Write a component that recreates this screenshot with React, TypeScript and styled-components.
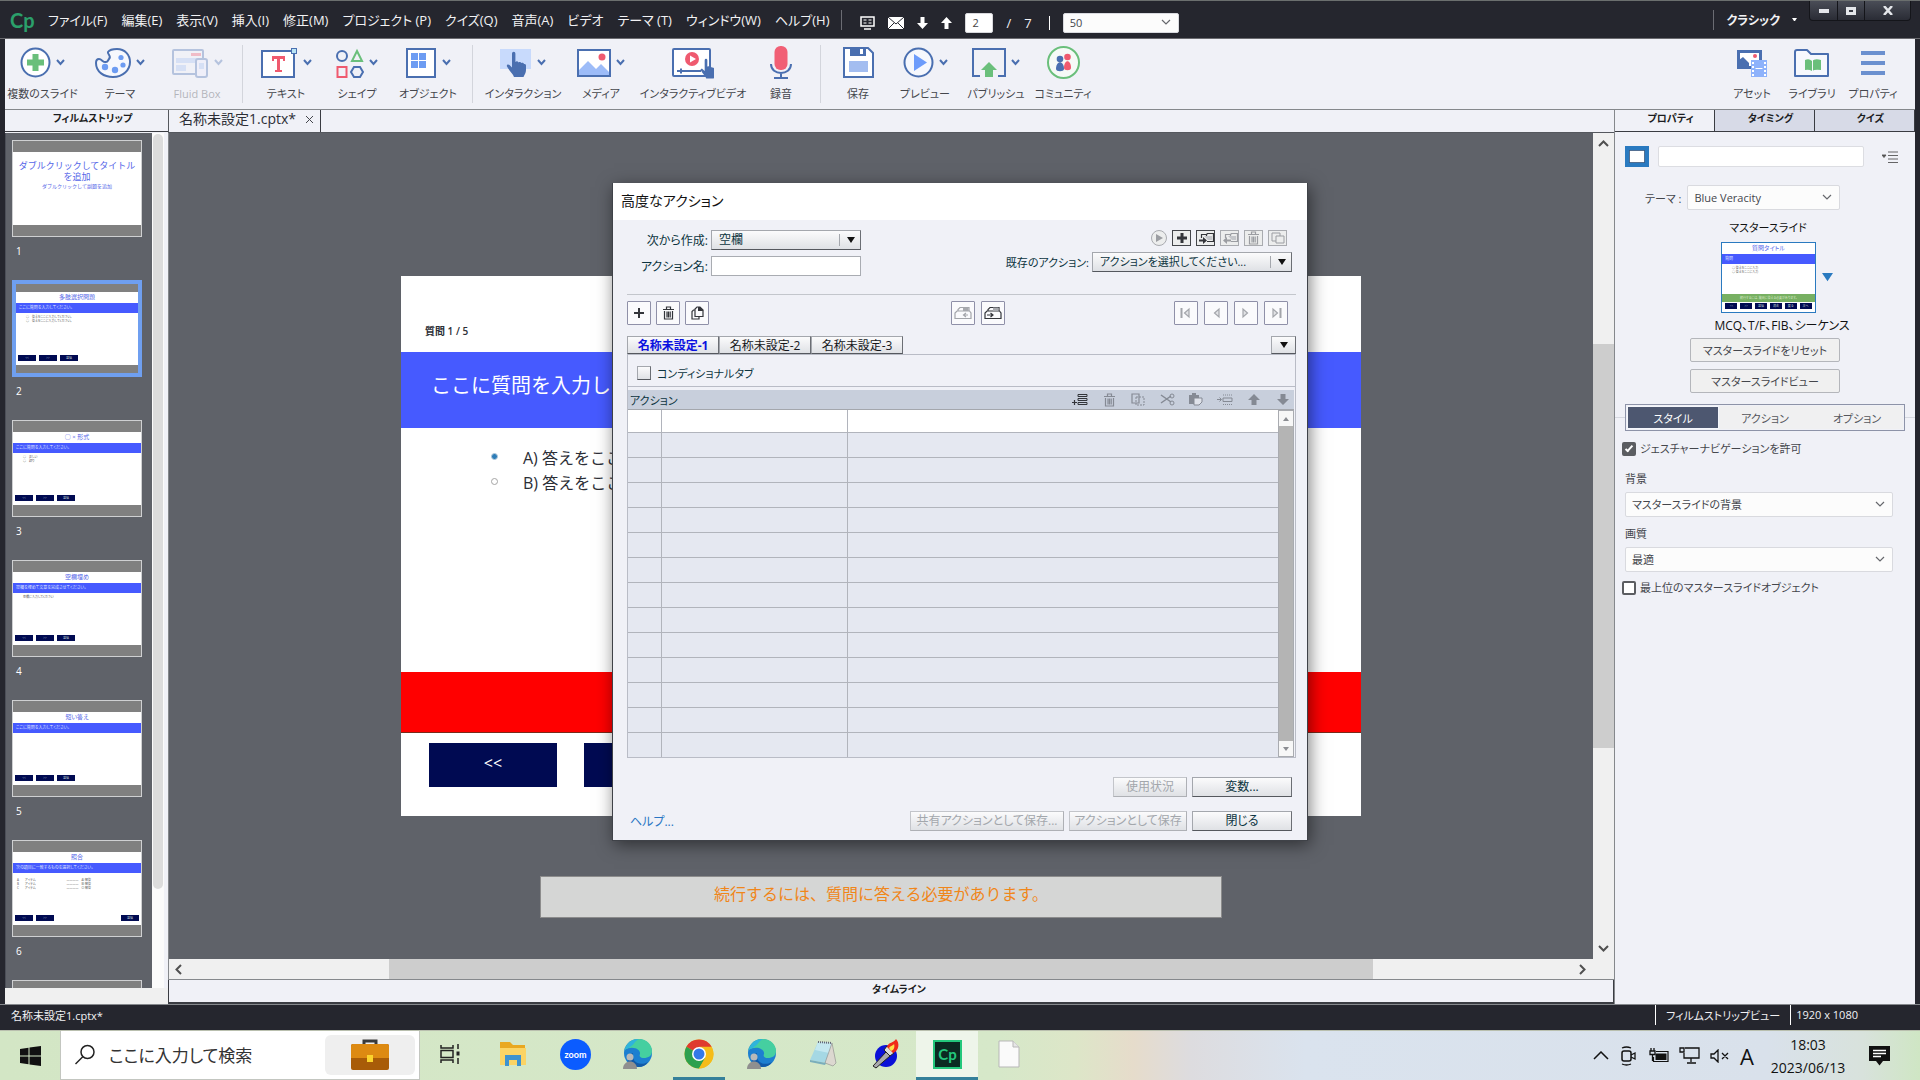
import React from "react";
import styled, { createGlobalStyle, css } from "styled-components";

const ink = "#2c2e36";
const panel = "#f0f1f7";
const dark = "#25262e";
const stage = "#5f6269";
const blue = "#4a6fb0";
const teal = "#0c3440";

const GlobalStyle = createGlobalStyle`
  *, *::before, *::after { box-sizing: border-box; }
  body { margin: 0; }
  body, button, input, select {
    font-family: "Open Sans", "Noto Sans CJK JP", sans-serif;
    font-feature-settings: "palt";
  }
  button { padding: 0; border: 0; background: none; color: inherit; font-size: inherit; }
  svg { display: block; flex: none; }
`;

/* ---------- window frame ---------- */

const Screen = styled.div`
  position: relative;
  display: flex;
  flex-direction: column;
  height: 100vh;
  overflow: hidden;
  font-size: 12px;
  color: ${ink};
  background: ${dark};
`;

const MenuBar = styled.header`
  display: flex;
  align-items: center;
  height: 39px;
  flex: none;
  padding-left: 10px;
  border-top: 1px solid #6b6f6e;
  border-bottom: 1px solid #6b6b70;
  color: #f2f2f4;
  font-size: 13px;
  white-space: nowrap;
`;

const Logo = styled.span`
  width: 38px;
  color: #2ba06b;
  font: bold 20px/24px Lato, sans-serif;
`;

const Menus = styled.nav`
  display: flex;
  gap: 14px;
  line-height: 20px;
`;

const VLine = styled.i<{ $h: number; $c?: string; $m?: string }>`
  width: 1px;
  height: ${(p) => p.$h}px;
  margin: ${(p) => p.$m || "0"};
  background: ${(p) => p.$c || "#6b6c73"};
  flex: none;
`;

const QuickTools = styled.div`
  display: flex;
  align-items: center;
  gap: 13px;
  margin-left: 18px;
  padding-top: 6px;
`;

const PageBox = styled.input`
  width: 28px;
  height: 20px;
  padding: 0 6px;
  border: 1px solid #d8d8dc;
  border-radius: 2px;
  font-size: 11px;
  color: #444;
`;

const SelectWrap = styled.span<{ $w?: string; $h?: number }>`
  display: inline-grid;
  grid-template-columns: 1fr 18px;
  align-items: center;
  width: ${(p) => p.$w || "100%"};
  height: ${(p) => p.$h || 25}px;
  & > select {
    grid-area: 1 / 1 / 2 / 3;
    width: 100%;
    height: 100%;
    appearance: none;
    padding: 0 6px;
    border: 1px solid #d9dadf;
    border-radius: 2px;
    background: #fcfcfc;
    color: #44464c;
    font-size: 11px;
  }
  & > svg { grid-area: 1 / 2; pointer-events: none; }
`;

const Workspace = styled.div`
  display: flex;
  align-items: center;
  gap: 12px;
  margin-left: auto;
  font-size: 12px;
  font-weight: 600;
`;

const WindowButtons = styled.div`
  display: flex;
  align-self: flex-start;
  margin: 0 9px 0 12px;
  border: 1px solid #14151a;
  border-top: 0;
  border-radius: 0 0 4px 4px;
  background: linear-gradient(#4a4d57, #2a2c35);
`;

const WinBtn = styled.button<{ $w: number }>`
  display: grid;
  place-items: center;
  width: ${(p) => p.$w}px;
  height: 19px;
  & + & { border-left: 1px solid #14151a; }
`;

/* ---------- main toolbar ---------- */

const Frame = styled.div`
  display: flex;
  flex-direction: column;
  flex: 1;
  min-height: 0;
  margin: 0 5px;
  background: ${panel};
`;

const ToolBar = styled.div`
  display: flex;
  align-items: center;
  height: 71px;
  flex: none;
  padding-right: 11px;
  border-bottom: 1px solid #85888c;
`;

const Tool = styled.button<{ $w: number; $off?: boolean }>`
  display: flex;
  flex-direction: column;
  align-items: center;
  gap: 7px;
  width: ${(p) => p.$w}px;
  font-size: 11px;
  line-height: 16px;
  color: #44464c;
  white-space: nowrap;
  opacity: ${(p) => (p.$off ? 0.35 : 1)};
`;

const ToolIcon = styled.span`
  display: flex;
  align-items: center;
  gap: 5px;
  height: 32px;
`;

const Spring = styled.span` flex: 1; `;

/* ---------- body ---------- */

const Body = styled.div`
  display: grid;
  grid-template-columns: 163px 1fr 301px;
  flex: 1;
  min-height: 0;
`;

const Column = styled.section`
  display: flex;
  flex-direction: column;
  min-height: 0;
  min-width: 0;
`;

const PanelTitle = styled.h2`
  margin: 0;
  height: 22px;
  flex: none;
  padding-left: 12px;
  border-bottom: 1px solid #3a3c42;
  font-size: 10px;
  line-height: 16px;
  text-align: center;
  color: #1c1d22;
`;

const Film = styled.div`
  display: grid;
  grid-template-columns: 147px 12px;
  flex: 1;
  min-height: 0;
  padding-top: 1px;
`;

const FilmList = styled.ol`
  margin: 0;
  padding: 7px 6px 0;
  list-style: none;
  overflow: hidden;
  background: ${stage};
  border-left: 1px solid #4b4e57;
`;

const FilmItem = styled.li`
  height: 140px;
  color: #fff;
  font-size: 10px;
  line-height: 14px;
`;

const FilmNumber = styled.div` padding: 7px 4px; `;

const FilmTrack = styled.div`
  padding: 1px 1px 0;
  background: #fbfbfb;
  &::before {
    content: "";
    display: block;
    height: 755px;
    border-radius: 5px;
    background: #dcdcdc;
  }
`;

const FilmFoot = styled.div`
  height: 16px;
  flex: none;
  background: #f0f0f0;
`;

const Thumb = styled.div<{ $on?: boolean }>`
  display: flex;
  flex-direction: column;
  height: 97px;
  width: 130px;
  border: 1px solid #cfd0d2;
  border-color: ${(p) => (p.$on ? "#6f9ff0" : "#cfd0d2")};
  border-width: ${(p) => (p.$on ? 4 : 1)}px;
  background: #fff;
  color: #5566e8;
  line-height: 10px;
  text-align: center;
  white-space: nowrap;
  overflow: hidden;
`;

const Band = styled.div<{ $h?: number }>`
  height: ${(p) => p.$h || 11}px;
  flex: none;
  background: #808080;
`;

const ThumbTitle = styled.div`
  height: 11px;
  flex: none;
  font-size: 6px;
`;

const ThumbBar = styled.div`
  height: 10px;
  flex: none;
  padding-left: 3px;
  background: #465aff;
  color: #dfe3ff;
  font-size: 4px;
  text-align: left;
`;

const ThumbBody = styled.div<{ $wide?: boolean }>`
  display: flex;
  flex-direction: column;
  flex: 1;
  min-height: 0;
  padding: ${(p) => (p.$wide ? "5px 50px 0 4px" : "2px 10px 0")};
  color: #555;
  font-size: 3px;
  line-height: 4px;
  text-align: left;
`;

const ThumbLine = styled.span`
  display: flex;
  justify-content: space-between;
`;

const ThumbButtons = styled.div<{ $spread?: boolean }>`
  display: flex;
  gap: 3px;
  flex: none;
  padding: 0 2px 4px;
  ${(p) => p.$spread && css` & > :last-child { margin-left: auto; } `}
`;

const ThumbKey = styled.span`
  width: 18px;
  height: 6px;
  background: #000a52;
  color: #cdd;
  font-size: 3px;
  line-height: 6px;
  text-align: center;
`;

const Cover = styled.div`
  flex: 1;
  padding-top: 8px;
  font-feature-settings: normal;
`;

const CoverText = styled.div<{ $small?: boolean }>`
  font-size: ${(p) => (p.$small ? 5 : 9)}px;
  line-height: ${(p) => (p.$small ? 9 : 11)}px;
  white-space: pre-line;
`;

const DocTabs = styled.div`
  display: flex;
  height: 23px;
  flex: none;
  border-bottom: 1px solid #55585e;
`;

const DocTab = styled.button`
  display: flex;
  align-items: center;
  gap: 10px;
  width: 153px;
  padding: 0 0 4px 10px;
  border-left: 1px solid #55585e;
  border-right: 1px solid #3a3c42;
  font-size: 14px;
  line-height: 18px;
  white-space: nowrap;
`;

const StageGrid = styled.div`
  display: grid;
  grid-template-columns: 1fr 21px;
  grid-template-rows: 1fr 21px;
  flex: 1;
  min-height: 0;
  border-left: 1px solid #85888c;
`;

const Canvas = styled.div`
  display: flex;
  flex-direction: column;
  align-items: center;
  gap: 60px;
  padding-top: 143px;
  overflow: hidden;
  background: ${stage};
`;

const VTrack = styled.div`
  display: flex;
  flex-direction: column;
  align-items: center;
  justify-content: space-between;
  padding: 6px 0;
  background: linear-gradient(#cdcdcd, #cdcdcd) 0 211px / 100% 404px no-repeat, #f0f0f0;
`;

const HTrack = styled.div`
  grid-column: 1 / -1;
  display: flex;
  align-items: center;
  justify-content: space-between;
  padding: 0 27px 0 5px;
  border-bottom: 1px solid #85888c;
  background: linear-gradient(#cdcdcd, #cdcdcd) 220px 0 / 984px 100% no-repeat, #f0f0f0;
`;

const Timeline = styled.h2`
  margin: 0;
  height: 24px;
  flex: none;
  border: solid #3a3c42;
  border-width: 0 1px 2px;
  font-size: 10px;
  line-height: 18px;
  text-align: center;
  padding-left: 16px;
  color: #1c1d22;
`;

const Slide = styled.article`
  display: flex;
  flex-direction: column;
  width: 960px;
  height: 540px;
  flex: none;
  background: #fff;
  font-feature-settings: normal;
`;

const SlideCount = styled.p`
  margin: 0;
  height: 76px;
  padding: 46px 24px 0;
  font-size: 10px;
  line-height: 18px;
  font-weight: 600;
`;

const SlideTitle = styled.h1`
  margin: 0;
  height: 76px;
  padding: 0 30px;
  background: #465aff;
  color: #fff;
  font-size: 20px;
  line-height: 68px;
  font-weight: 400;
`;

const Answers = styled.div`
  flex: 1;
  padding: 18px 90px;
  font-size: 16px;
  line-height: 25px;
`;

const Answer = styled.label`
  display: flex;
  align-items: center;
  gap: 24px;
  & > input {
    appearance: none;
    width: 7px;
    height: 7px;
    margin: 0 1px 5px 0;
    border: 1px solid #a5a5a5;
    border-radius: 50%;
  }
  & > input:checked { border-color: #b5cbdc; background: #2d7db8; }
`;

const Feedback = styled.div`
  height: 61px;
  border-bottom: 1px solid #7a2a1a;
  background: #f00;
`;

const SlideKeys = styled.div`
  display: flex;
  gap: 27px;
  height: 83px;
  padding: 10px 28px;
`;

const SlideKey = styled.button`
  width: 128px;
  height: 44px;
  padding-bottom: 5px;
  background: #000a52;
  color: #fff;
  font-size: 16px;
`;

const Notice = styled.p`
  margin: 0;
  width: 682px;
  height: 42px;
  flex: none;
  border: 1px solid #8c8c8c;
  background: #d5d6d5;
  color: #f0861a;
  font-size: 16px;
  line-height: 34px;
  text-align: center;
  font-feature-settings: normal;
`;

/* ---------- properties panel ---------- */

const Side = styled(Column)`
  border-left: 1px solid #85888c;
`;

const SideTabs = styled.div`
  display: grid;
  grid-template-columns: repeat(3, 1fr);
  height: 22px;
  flex: none;
  border-bottom: 1px solid #3a3c42;
`;

const SideTab = styled.button<{ $on?: boolean }>`
  padding: 0 0 6px 12px;
  background: ${(p) => (p.$on ? panel : "#d7dae7")};
  border-right: 1px solid #3a3c42;
  font-size: 10px;
  font-weight: 700;
  color: #1c1d22;
`;

const SideTop = styled.div`
  display: flex;
  align-items: center;
  gap: 9px;
  padding: 14px 17px 0 10px;
`;

const NameBox = styled.input`
  width: 208px;
  height: 21px;
  border: 1px solid #dcdde2;
  border-radius: 2px;
  background: #fff;
`;

const ThemeRow = styled.div`
  display: flex;
  align-items: center;
  gap: 6px;
  padding: 18px 0 0 30px;
  color: #44464c;
  font-size: 11px;
`;

const Centered = styled.div`
  display: flex;
  flex-direction: column;
  align-items: center;
  padding: 9px 0 0 6px;
  font-size: 11px;
  line-height: 18px;
  color: #111;
`;

const MasterRow = styled.div`
  display: flex;
  align-items: center;
  gap: 6px;
  margin: 5px 0 4px 18px;
`;

const MasterName = styled.span`
  margin-bottom: 3px;
  padding-left: 28px;
  font-size: 12px;
`;

const Master = styled.div`
  display: flex;
  flex-direction: column;
  width: 95px;
  height: 71px;
  border: 1px solid #2a7ac0;
  background: #fff;
  color: #5566e8;
  line-height: 10px;
  text-align: center;
  font-size: 4px;
`;

const MasterFoot = styled.div`
  height: 8px;
  background: #77b062;
  color: #d8e8c8;
  font-size: 3px;
  line-height: 8px;
`;

const MasterKeys = styled.div`
  display: flex;
  justify-content: space-around;
  padding: 1px 2px 3px;
  & > span { width: 12px; }
`;

const PlainButton = styled.button`
  width: 150px;
  height: 24px;
  margin: 0 6px 7px 0;
  border: 1px solid #b4b6bb;
  border-radius: 2px;
  background: #f0f0f0;
  color: #44464c;
  font-size: 11px;
`;

const SegmentRow = styled.div`
  display: flex;
  align-items: center;
  padding-top: 4px;
  &::before, &::after { content: ""; flex: 1; height: 1px; background: #d6d8e0; }
`;

const Segments = styled.div`
  display: grid;
  grid-template-columns: 92px 1fr 1fr;
  width: 280px;
  height: 27px;
  padding: 1px;
  border: 1px solid #8d93a8;
`;

const Segment = styled.button<{ $on?: boolean }>`
  background: ${(p) => (p.$on ? "#4d5770" : "#f0f0f1")};
  border: ${(p) => (p.$on ? "1px solid #f4f6fb" : "0")};
  color: ${(p) => (p.$on ? "#fff" : "#55575d")};
  font-size: 11px;
`;

const Fields = styled.div`
  display: flex;
  flex-direction: column;
  padding: 10px 22px 0 7px;
  color: #44464c;
  font-size: 11px;
`;

const FieldLabel = styled.label`
  padding: 8px 0 4px 3px;
  line-height: 18px;
`;

const FieldRow = styled.div` display: flex; padding-left: 3px; `;

const Check = styled.label<{ $mt?: number; $mb?: number }>`
  display: flex;
  align-items: center;
  gap: 4px;
  margin-top: ${(p) => p.$mt || 0}px;
  margin-bottom: ${(p) => p.$mb || 0}px;
  line-height: 16px;
  white-space: nowrap;
  & > input {
    appearance: none;
    display: grid;
    place-items: center;
    width: 14px;
    height: 14px;
    margin: 0;
    border: 2px solid #5b5d61;
    border-radius: 2px;
    background: #fff;
  }
  & > input:checked { background: #5b5d61; }
  & > input:checked::after {
    content: "";
    width: 4px;
    height: 8px;
    margin-bottom: 2px;
    border: solid #fff;
    border-width: 0 2px 2px 0;
    transform: rotate(42deg);
  }
`;

const StatusBar = styled.footer`
  display: flex;
  align-items: center;
  height: 26px;
  flex: none;
  padding: 0 62px 6px 11px;
  border-top: 1px solid #85888c;
  color: #f2f2f4;
  font-size: 11px;
  white-space: nowrap;
`;

/* ---------- dialog ---------- */

const Dialog = styled.div`
  position: absolute;
  top: 183px;
  left: 50%;
  transform: translateX(-50%);
  display: flex;
  flex-direction: column;
  width: 696px;
  height: 658px;
  border: 1px solid #3f4248;
  border-top-width: 0;
  background: ${panel};
  box-shadow: 2px 4px 16px rgba(0, 0, 0, 0.5);
  color: ${teal};
  white-space: nowrap;
`;

const DialogTitle = styled.h2`
  margin: 0;
  height: 37px;
  flex: none;
  padding-left: 8px;
  background: #fff;
  color: #111;
  font-size: 14px;
  font-weight: 400;
  line-height: 36px;
`;

const DialogTop = styled.div`
  display: flex;
  justify-content: space-between;
  height: 75px;
  flex: none;
  margin: 0 11px 0 14px;
  padding: 10px 4px 0 0;
  border-bottom: 1px solid #c3c6cc;
`;

const Form = styled.div`
  display: grid;
  grid-template-columns: 81px 150px;
  grid-auto-rows: 20px;
  column-gap: 3px;
  row-gap: 6px;
  align-items: center;
  text-align: right;
`;

const TextBox = styled.input`
  width: 150px;
  height: 20px;
  border: 1px solid #a9acb2;
  background: #fff;
`;

const metal = css`
  border: 1px solid #a4a7ad;
  border-right-color: #6b6e74;
  border-bottom-color: #55585e;
  background: linear-gradient(#fbfbfc, #dfe1e5);
`;

const MetalSelect = styled.span<{ $w: number; $fs?: number }>`
  display: inline-grid;
  grid-template-columns: 1fr 22px;
  align-items: center;
  width: ${(p) => p.$w}px;
  height: 20px;
  & > select {
    grid-area: 1 / 1 / 2 / 3;
    width: 100%;
    height: 20px;
    appearance: none;
    padding: 0 7px;
    ${metal}
    border-radius: 0;
    color: ${teal};
    font-size: ${(p) => p.$fs || 12}px;
    line-height: 16px;
  }
  & > span {
    grid-area: 1 / 2;
    display: grid;
    place-items: center;
    height: 12px;
    border-left: 1px solid #a4a7ad;
    pointer-events: none;
  }
`;

const Existing = styled.div`
  display: flex;
  flex-direction: column;
  align-items: flex-end;
  gap: 6px;
  font-size: 11px;
`;

const Row = styled.div<{ $gap: number; $mr?: number }>`
  display: flex;
  align-items: center;
  gap: ${(p) => p.$gap}px;
  margin-right: ${(p) => p.$mr || 0}px;
`;

const MiniButton = styled.button<{ $round?: boolean }>`
  display: grid;
  place-items: center;
  width: ${(p) => (p.$round ? 16 : 19)}px;
  height: 16px;
  border: 1px solid #43454a;
  border-radius: ${(p) => (p.$round ? 8 : 0)}px;
  background: #eceded;
  color: #33353a;
  &:disabled { border-color: #a9abb0; color: #9b9da2; }
`;

const Bar = styled.div`
  display: flex;
  align-items: center;
  flex: none;
  height: 24px;
  margin: 6px 19px 11px 14px;
`;

const SquareButton = styled.button`
  display: grid;
  place-items: center;
  width: 24px;
  height: 24px;
  border: 1px solid #8f90a8;
  border-radius: 1px;
  background: #fafafc;
  color: #33353a;
  &:disabled { color: #a3a5aa; }
`;

const TabRow = styled.div`
  display: flex;
  height: 18px;
  flex: none;
  margin: 0 11px 0 14px;
`;

const ActionTab = styled.button<{ $on?: boolean }>`
  width: 92px;
  ${metal}
  color: ${(p) => (p.$on ? "#0a10e0" : "#15161a")};
  font-size: 12px;
  font-weight: ${(p) => (p.$on ? 700 : 400)};
  line-height: 15px;
`;

const TabMenu = styled.button`
  display: grid;
  place-items: center;
  width: 25px;
  margin-left: auto;
  ${metal}
`;

const TabPanel = styled.div`
  flex: none;
  margin: 0 11px 0 14px;
  border: 1px solid #b9bcc6;
  font-size: 11px;
`;

const Conditional = styled.label`
  display: flex;
  align-items: center;
  gap: 6px;
  height: 32px;
  padding: 5px 9px 0;
  border-bottom: 1px solid #b9bcc6;
  & > input {
    appearance: none;
    width: 14px;
    height: 14px;
    margin: 0;
    ${metal}
  }
`;

const ActionHead = styled.div`
  display: flex;
  align-items: center;
  justify-content: space-between;
  height: 20px;
  margin: 3px 1px 0 0;
  padding: 0 3px 0 2px;
  border-bottom: 1px solid #a4a7ad;
  background: #c8cfdc;
`;

const HeadButton = styled.button`
  display: grid;
  place-items: center;
  width: 16px;
  height: 16px;
  color: #33353a;
  &:disabled { color: #858a94; }
`;

const TableWrap = styled.div`
  display: grid;
  grid-template-columns: 1fr 16px;
  margin-right: 1px;
`;

const Table = styled.table`
  width: 100%;
  border-collapse: separate;
  border-spacing: 0;
  table-layout: fixed;
  & td {
    height: 25px;
    padding: 0;
    border: solid #b1b4bc;
    border-width: 0 1px 1px 0;
    background: #e5e8f1;
  }
  & td:first-child { width: 34px; }
  & td:nth-child(2) { width: 186px; }
  & td:last-child { border-right: 0; }
  & tr:first-child td { height: 23px; background: #fff; }
  & tr:last-child td { border-bottom: 0; height: 24px; }
`;

const InnerTrack = styled.div`
  display: flex;
  flex-direction: column;
  justify-content: space-between;
  border: 1px solid #a9abb0;
  background: #b4b4b4;
  & > button { display: grid; place-items: center; height: 15px; background: #f7f7f7; }
`;

const DialogFoot = styled.div`
  display: flex;
  flex-direction: column;
  align-items: flex-end;
  gap: 14px;
  margin: auto 15px 9px 17px;
`;

const FootRow = styled.div`
  display: flex;
  gap: 5px;
  width: 100%;
  justify-content: flex-end;
  align-items: center;
`;

const HelpLink = styled.a`
  margin-right: auto;
  color: #2a76c4;
  text-decoration: none;
`;

const MetalButton = styled.button<{ $w: number }>`
  width: ${(p) => p.$w}px;
  height: 20px;
  ${metal}
  line-height: 16px;
  color: ${teal};
  &:disabled { border-color: #c3c5ca #aeb0b5 #aeb0b5 #c3c5ca; color: #a3a7ac; }
`;

/* ---------- windows taskbar ---------- */

const TaskBar = styled.div`
  display: flex;
  align-items: center;
  height: 50px;
  flex: none;
  border-top: 1px solid #b9bfae;
  background: linear-gradient(90deg, #d3e6c5 0, #d6e8c9 52%, #dde6c8 56%, #e6dccb 59%, #dddcdf 62%, #dae3ee 68%, #d9e1eb 92%, #d8e2dc 97%, #cfe6c4 100%);
`;

const Start = styled.button`
  display: grid;
  place-items: center;
  width: 60px;
  height: 49px;
`;

const Search = styled.label`
  display: flex;
  align-items: center;
  width: 360px;
  height: 49px;
  padding: 0 4px 0 13px;
  border: 1px solid #c3c6c0;
  border-width: 0 1px 1px;
  background: #fff;
  & > input {
    flex: 1;
    min-width: 0;
    height: 30px;
    margin-left: 13px;
    padding: 0;
    border: 0;
    outline: 0;
    font-size: 17px;
  }
  & > input::placeholder { color: #333; opacity: 1; }
`;

const SearchArt = styled.span`
  display: grid;
  place-items: center;
  width: 90px;
  height: 40px;
  border-radius: 6px;
  background: #efefef;
`;

const TaskButton = styled.button<{ $line?: boolean; $on?: boolean }>`
  display: flex;
  flex-direction: column;
  align-items: center;
  width: 62px;
  height: 49px;
  background: ${(p) => (p.$on ? "#eef5ea" : "none")};
  & > span { display: grid; place-items: center; height: 46px; }
  &::after {
    content: "";
    width: ${(p) => (p.$on ? 62 : 52)}px;
    height: 3px;
    background: ${(p) => (p.$line || p.$on ? "#35809a" : "none")};
  }
`;

const Tray = styled.div`
  display: flex;
  align-items: center;
  gap: 10px;
  margin-left: auto;
  padding-right: 30px;
  color: #111;
`;

const Clock = styled.time`
  width: 88px;
  margin-right: 7px;
  font-size: 14px;
  line-height: 23px;
  text-align: center;
`;

const InputMode = styled.span` font-size: 22px; line-height: 24px; `;

/* ---------- drawings ---------- */

const Svg = ({ w, h, children, vb }: { w: number; h: number; vb?: string; children: React.ReactNode }) => (
  <svg width={w} height={h} viewBox={vb || `0 0 ${w} ${h}`} fill="none" aria-hidden="true">{children}</svg>
);

const Chevron = ({ c = blue }: { c?: string }) => (
  <Svg w={9} h={7}><path d="M1 1l3.500 4L8 1" stroke={c} strokeWidth="2" /></Svg>
);
const ThinChevron = () => <Svg w={10} h={7}><path d="M1 1l4 4 4-4" stroke="#66686d" strokeWidth="1.2" /></Svg>;
const Down = ({ c = "#111", w = 8 }: { c?: string; w?: number }) => (
  <Svg w={w} h={w * 0.75} vb="0 0 8 6"><path d="M0 0h8L4 6z" fill={c} /></Svg>
);

const hand = "M6 1.500a1.700 1.700 0 0 1 3.400 0V10c1-1 2.600-.8 3 .4 1-.8 2.500-.5 2.900.7 1-.6 2.400-.1 2.700 1 1-.4 2 .3 2 1.400V18c0 3-1.500 4.500-2.500 7H8c-.8-3-5-6.500-7-10.500-.8-1.800 1.200-2.800 2.500-1.500L6 15.500z";

const icons: Record<string, React.ReactNode> = {
  add: <Svg w={31} h={31}><circle cx="15.500" cy="15.500" r="14" fill="#fff" stroke={blue} strokeWidth="2" /><path d="M12.500 7h6v5.500H24v6h-5.500V24h-6v-5.500H7v-6h5.500z" fill="#6abf7b" /></Svg>,
  palette: <Svg w={36} h={30}><path d="M14 11c3-3-2-5-1-7 2-3 7-3 9-3 8 0 13 6 13 13 0 8-7 15-17 15C9 29 1 24 1 15c0-3 1-4 3-4 3 0 4 4 7 3 2 0 2-2 3-3z" stroke={blue} strokeWidth="2" fill="#f6f8fd" /><g fill="#6d9cf2"><circle cx="10" cy="19" r="3.200" /><circle cx="20" cy="22" r="3.200" /><circle cx="28" cy="17" r="2.600" /><circle cx="26" cy="9.500" r="2.600" /></g></Svg>,
  fluid: <Svg w={37} h={30}><rect x="1" y="2" width="30" height="24" rx="1" stroke={blue} strokeWidth="2" /><path d="M19 5h10v3H19z" fill="#f15b70" /><path d="M4 10h24v5H4zM4 17h10v6H4z" fill="#a8c2f2" /><rect x="24" y="11" width="11" height="18" rx="2" fill="#eef" stroke={blue} strokeWidth="2" /><path d="M27 15h5v6h-5z" fill="#a8c2f2" /></Svg>,
  text: <Svg w={37} h={31}><rect x="1" y="4" width="32" height="26" fill="#fff" stroke={blue} strokeWidth="2" /><path d="M11 9h13v5h-2v-2h-3v11h2v2h-7v-2h2V12h-3v2h-2z" fill="#ef5a6f" /><rect x="30.500" y="1.500" width="5" height="5" fill="#b9e4f5" stroke={blue} /></Svg>,
  shapes: <Svg w={28} h={30}><circle cx="6" cy="8" r="5" stroke={blue} strokeWidth="2" /><path d="M21 3l5 10H16z" stroke="#6abf7b" strokeWidth="2" /><rect x="1.500" y="19" width="9" height="10" stroke="#ef5a6f" strokeWidth="2" /><path d="M18 19h6l3 5-3 5h-6l-3-5z" stroke={blue} strokeWidth="2" /></Svg>,
  objects: <Svg w={31} h={31}><rect x="1" y="2" width="28" height="28" fill="#fff" stroke={blue} strokeWidth="2" /><path d="M5 6h7v7H5zM13 6h7v7h-7zM5 14h7v7H5zM13 14h7v7h-7z" fill="#6d9cf2" /></Svg>,
  interact: <Svg w={32} h={31}><path d="M0 2h31v20H0z" fill="#c8dafc" /><g transform="translate(6 5)"><path d={hand} fill={blue} /></g></Svg>,
  media: <Svg w={34} h={30}><rect x="1" y="2" width="32" height="26" fill="#fff" stroke={blue} strokeWidth="2" /><path d="M2 27V22l9-9 8 8 5-5 8 8v3z" fill="#9dbcf8" /><circle cx="25" cy="9" r="3.500" fill="#ef5a6f" /></Svg>,
  video: <Svg w={42} h={34}><rect x="1" y="3" width="37" height="27" rx="1" stroke={blue} strokeWidth="2" fill="#fff" /><circle cx="20" cy="13" r="7" fill="#ef5a6f" /><path d="M18 9.500l6 3.500-6 3.500z" fill="#fff" /><path d="M5 25h24M9 22.500v5" stroke={blue} strokeWidth="2" /><g transform="translate(28 13) scale(.78)"><path d={hand} fill={blue} /></g></Svg>,
  mic: <Svg w={22} h={33}><rect x="4.500" y="0" width="13" height="24" rx="6" fill="#f15f75" /><path d="M1 18c0 12 20 12 20 0M11 27v5M4 32h14" stroke={blue} strokeWidth="2" /></Svg>,
  save: <Svg w={31} h={32}><path d="M1 1h24l5 5v24H1z" fill="#fff" stroke={blue} strokeWidth="2" /><path d="M7 1h16v8H7z" fill={blue} /><path d="M17 2h3v5h-3z" fill="#fff" /><path d="M6 14h19v11H6z" fill="#a3bdf0" /></Svg>,
  preview: <Svg w={31} h={31}><circle cx="15.500" cy="15.500" r="14" fill="#f6f8fd" stroke={blue} strokeWidth="2" /><path d="M11 7l13 8.500L11 24z" fill="#6d9cfb" /></Svg>,
  publish: <Svg w={34} h={31}><path d="M8 29H1V2h32v27h-7" stroke={blue} strokeWidth="2" /><path d="M17 15l8 8h-4v7h-8v-7H9z" fill="#6abf7b" /></Svg>,
  community: <Svg w={33} h={33}><circle cx="16.500" cy="16.500" r="15.500" stroke="#6abf7b" strokeWidth="2" fill="#f6faf7" /><g fill="#ef5a6f"><circle cx="20.500" cy="11" r="3.300" /><path d="M17 22c0-9 7-9 7 0 0 3-7 3-7 0z" /></g><g fill={blue}><circle cx="13" cy="13" r="3.300" /><path d="M9 23c0-9 8-9 8 0 0 3-8 3-8 0z" /></g></Svg>,
  asset: <Svg w={30} h={30}><rect x="1.500" y="3.500" width="22" height="16" stroke={blue} strokeWidth="3" fill="#fff" /><path d="M2 20v-8l4-3 6 6v5z" fill={blue} /><circle cx="18" cy="8" r="2" fill="#ef5a6f" /><path d="M14 12h16v17H14z" fill="#8eb2fb" /><path d="M16 14v14M28 14v14" stroke="#fff" strokeWidth="2" strokeDasharray="2 2" /><path d="M18.500 20.500h7" stroke="#fff" /></Svg>,
  library: <Svg w={36} h={30}><path d="M1 28V4q0-2 2-2h10l4 4h17v22z" stroke={blue} strokeWidth="2" fill="#f6f8fd" strokeLinejoin="round" /><path d="M11 12q4-2 7 1 3-3 9-1v10q-6-1-9 1-3-2-7-1z" fill="#6abf7b" /><path d="M18.500 12v11" stroke="#f6f8fd" /></Svg>,
  props: <Svg w={24} h={26}><path d="M0 3h24M0 13h24M0 23h24" stroke="#6b90cf" strokeWidth="4" /></Svg>,
};

const Trash = () => (
  <Svg w={13} h={14}><path d="M1 3.500h11M4.500 3V1h4v2M2.500 5v8h8V5M5 5.500v6M6.500 5.500v6M8.200 5.500v6" stroke="currentColor" strokeWidth="1.200" /></Svg>
);
const Plus = ({ s = 12, t = 2 }: { s?: number; t?: number }) => (
  <Svg w={s} h={s} vb="0 0 12 12"><path d="M6 1v10M1 6h10" stroke="currentColor" strokeWidth={t} /></Svg>
);
const Folder = ({ out }: { out?: boolean }) => (
  <Svg w={16} h={12}>
    <path d="M3.500 6V2.500h5V4M8.500 2.500l1-1h6v8H9" stroke="currentColor" strokeWidth="1.200" />
    <path d="M6 4h8v4h-4z" fill="#c4c6ca" />
    <path d={out ? "M9 7.500H5V5L1 8.500 5 12V9.500h4z" : "M1 7.500h4V5l4 3.500L5 12V9.500H1z"} fill="currentColor" />
  </Svg>
);
const Brief = ({ out }: { out?: boolean }) => (
  <Svg w={18} h={14}>
    <path d="M4 5V3.500l2-2h9V5M1 12.500V7l2-2h12.500L17 7v5.500z" stroke="currentColor" strokeWidth="1.200" />
    <path d={out ? "M14 9h-4M12 7L9.500 9l2.500 2" : "M3 9h5M6.500 7L9 9l-2.500 2"} stroke="currentColor" strokeWidth="1.200" />
    <path d="M9 1.500h5.500V5H9z" fill="#a7a9ae" />
  </Svg>
);
const Nav = ({ flip, end }: { flip?: boolean; end?: boolean }) => (
  <Svg w={12} h={12}>
    <g transform={flip ? "translate(12 0) scale(-1 1)" : undefined}>
      {end && <path d="M1.500 1v10" stroke="currentColor" strokeWidth="2" />}
      <path d="M9 2v8L4.500 6z" fill="#e2e3e6" stroke="currentColor" strokeWidth="1.200" />
    </g>
  </Svg>
);

const Edge = () => (
  <Svg w={32} h={32}>
    <circle cx="17" cy="15" r="14" fill="#1d7fd0" />
    <path d="M3.500 12C6 4 12 1 18 1c8 0 13 6 13 12 0 5-4 7-8 7-4 0-5-2-4-4 1-5-8-9-15.500-4z" fill="#45cfa0" />
    <path d="M3.500 12C6 4 12 1 18 1c-6 3-3 6-14.500 11z" fill="#2fb4dc" />
    <path d="M12 15c-2 8 6 14 15 9-4 7-14 6-19 1-3-5 0-9 4-10z" fill="#125aa8" />
    <circle cx="9" cy="19" r="3.500" fill="#b9b9b9" /><path d="M2 31c0-10 14-10 14 0z" fill="#8f8f8f" />
  </Svg>
);

const taskIcons: { n: string; line?: boolean; on?: boolean; i: React.ReactNode }[] = [
  { n: "タスク ビュー", i: <Svg w={22} h={20}><path d="M1 1v3h12V1M1 19v-3h12v3M1 6.500h12v7H1zM18 0v5M18 14v6" stroke="#222" strokeWidth="1.500" /><path d="M16.500 7.500h3v4h-3z" fill="#222" /></Svg> },
  { n: "エクスプローラー", i: <Svg w={28} h={26}><path d="M1 1h10l3 3h12v19H1z" fill="#e9a820" /><path d="M1 7h26v17H1z" fill="#fbd465" /><path d="M6 25V14h16v11h-4v-6h-8v6z" fill="#3f93cf" /></Svg> },
  { n: "Zoom", i: <svg width="31" height="31" viewBox="0 0 31 31"><circle cx="15.500" cy="15.500" r="15.500" fill="#0b5cff" /><text x="15.500" y="18.500" fontSize="9" fontWeight="700" fontFamily="Lato, sans-serif" textAnchor="middle" fill="#fff">zoom</text></svg> },
  { n: "Edge", i: <Edge /> },
  { n: "Chrome", line: true, i: <Svg w={30} h={30}><circle cx="15" cy="15" r="14.500" fill="#f5bc18" /><path d="M15 15L2.400 7.800A14.500 14.500 0 0 1 27.600 7.800H15z" fill="#df3b2f" /><path d="M15 15L2.400 7.800A14.500 14.500 0 0 0 15 29.500l6-10.500z" fill="#2da04e" /><path d="M15 8h12.700A14.500 14.500 0 0 1 15 29.500l6.500-11z" fill="#f5bc18" /><circle cx="15" cy="15" r="7" fill="#fff" /><circle cx="15" cy="15" r="5.500" fill="#3479e8" /></Svg> },
  { n: "Edge 2", i: <Edge /> },
  { n: "メモ帳", i: <Svg w={28} h={28}><path d="M9 2l14 1-6 20L1 20z" fill="#a5d8e4" /><path d="M9 2l14 1-3 10-14-3z" fill="#c4e8f0" /><path d="M23 3l4 20-3 3-8-3z" fill="#dcd8d0" stroke="#888" strokeWidth=".6" /><path d="M1 20l16 3-1 2-15-3z" fill="#7aaebb" /><path d="M9 2l14 1" stroke="#667" strokeWidth="2" strokeDasharray="1 1" /></Svg> },
  { n: "ペイント", i: <Svg w={30} h={30}><circle cx="16" cy="17" r="11" fill="#0a10d8" /><path d="M3 27l13-14 4 4L6 29z" fill="#a9a9ad" stroke="#222" /><path d="M14 11l3-4 7 7-4 3z" fill="#ddd" stroke="#222" /><path d="M17 8C18 3 24 4 26 0c4 4 3 12-3 14z" fill="#f02a1a" /><path d="M19 9c2-3 4-2 5-4 1 3 0 6-3 7z" fill="#fde04a" /></Svg> },
  { n: "Captivate", on: true, i: <svg width="29" height="29" viewBox="0 0 29 29"><rect x="1" y="1" width="27" height="27" fill="#0b2a22" stroke="#23c77c" strokeWidth="2" /><text x="14.500" y="20" fontSize="15" fontWeight="700" fontFamily="Lato, sans-serif" textAnchor="middle" fill="#23c77c">Cp</text></svg> },
  { n: "ドキュメント", i: <Svg w={22} h={28}><path d="M1 1h14l6 6v20H1z" fill="#fafafa" stroke="#b7b7b7" /><path d="M15 1v6h6" fill="#e6e6e6" stroke="#b7b7b7" /></Svg> },
];

/* ---------- data ---------- */

const menus = ["ファイル(F)", "編集(E)", "表示(V)", "挿入(I)", "修正(M)", "プロジェクト (P)", "クイズ(Q)", "音声(A)", "ビデオ", "テーマ (T)", "ウィンドウ(W)", "ヘルプ(H)"];

type ToolSpec = { icon: string; label: string; w: number; menu?: boolean; off?: boolean };
const toolGroups: ToolSpec[][] = [
  [
    { icon: "add", label: "複数のスライド", w: 75, menu: true },
    { icon: "palette", label: "テーマ", w: 80, menu: true },
    { icon: "fluid", label: "Fluid Box", w: 74, menu: true, off: true },
  ],
  [
    { icon: "text", label: "テキスト", w: 72, menu: true },
    { icon: "shapes", label: "シェイプ", w: 70, menu: true },
    { icon: "objects", label: "オブジェクト", w: 72, menu: true },
  ],
  [
    { icon: "interact", label: "インタラクション", w: 86, menu: true },
    { icon: "media", label: "メディア", w: 70, menu: true },
    { icon: "video", label: "インタラクティブビデオ", w: 114 },
    { icon: "mic", label: "録音", w: 62 },
  ],
  [
    { icon: "save", label: "保存", w: 60 },
    { icon: "preview", label: "プレビュー", w: 74, menu: true },
    { icon: "publish", label: "パブリッシュ", w: 68, menu: true },
    { icon: "community", label: "コミュニティ", w: 66 },
  ],
];
const rightTools: ToolSpec[] = [
  { icon: "asset", label: "アセット", w: 60 },
  { icon: "library", label: "ライブラリ", w: 60 },
  { icon: "props", label: "プロパティ", w: 62 },
];

type SlideSpec = { title: string; bar: string; lines: string[][]; spread?: boolean };
const slides: (SlideSpec | null)[] = [
  null,
  { title: "多肢選択問題", bar: "ここに質問を入力してください。", lines: [["○　答えをここに入力してください。"], ["○　答えをここに入力してください。"]] },
  { title: "○ × 形式", bar: "ここに質問を入力してください。", lines: [["○　正しい"], ["○　誤り"]] },
  { title: "空欄埋め", bar: "空欄を埋めて文章を完成させてください。", lines: [["空欄に入力してください"]] },
  { title: "短い答え", bar: "ここに質問を入力してください。", lines: [] },
  { title: "照合", bar: "次の項目に一致するものを選択してください。", spread: true, lines: [["A　　アイテム", "――――　A) 解答"], ["B　　アイテム", "――――　B) 解答"], ["C　　アイテム", "――――　C) 解答"]] },
  null,
];

const ToolButton = ({ t }: { t: ToolSpec }) => (
  <Tool $w={t.w} $off={t.off} type="button">
    <ToolIcon>{icons[t.icon]}{t.menu && <Chevron />}</ToolIcon>
    {t.label}
  </Tool>
);

const SlideThumb = ({ i }: { i: number }) => {
  const s = slides[i];
  const on = i === 1;
  if (!s)
    return (
      <Thumb>
        <Band />
        <Cover>
          {i === 0 && <CoverText>{"ダブルクリックしてタイトル\nを追加"}</CoverText>}
          {i === 0 && <CoverText $small>ダブルクリックして副題を追加</CoverText>}
        </Cover>
        <Band />
      </Thumb>
    );
  return (
    <Thumb $on={on}>
      <Band $h={on ? 8 : 11} />
      <ThumbTitle>{s.title}</ThumbTitle>
      <ThumbBar>{s.bar}</ThumbBar>
      <ThumbBody $wide={s.spread}>
        {s.lines.map((l, k) => <ThumbLine key={k}>{l.map((c) => <span key={c}>{c}</span>)}</ThumbLine>)}
      </ThumbBody>
      <ThumbButtons $spread={s.spread}>
        <ThumbKey>&lt;&lt;</ThumbKey><ThumbKey>&gt;&gt;</ThumbKey><ThumbKey>送信</ThumbKey>
      </ThumbButtons>
      <Band $h={on ? 8 : 11} />
    </Thumb>
  );
};

const headIcons: { n: string; on?: boolean; i: React.ReactNode }[] = [
  { n: "行を追加", on: true, i: <Svg w={16} h={13}><path d="M6 1.500h9v2H6zM6 5.500h9v2H6zM6 9.500h9v2H6z" stroke="currentColor" /><path d="M0 9.500h5M2.500 7v5" stroke="currentColor" strokeWidth="1.200" /></Svg> },
  { n: "行を削除", i: <Trash /> },
  { n: "行をコピー", i: <Svg w={14} h={13}><path d="M1 1h7v9H1z" stroke="currentColor" strokeWidth="1.200" /><path d="M5 4h8v8H5z" stroke="currentColor" strokeDasharray="2 1" /></Svg> },
  { n: "切り取り", i: <Svg w={15} h={13}><path d="M1 2l10 7M1 10l10-7" stroke="currentColor" strokeWidth="1.500" /><circle cx="12" cy="3" r="2" stroke="currentColor" /><circle cx="12" cy="10" r="2" stroke="currentColor" /></Svg> },
  { n: "貼り付け", i: <Svg w={14} h={13}><path d="M0 2h3V0h4v2h3v9H0z" fill="currentColor" /><path d="M5 5h8v4l-3 3H5z" fill="#dfe2ea" stroke="currentColor" /></Svg> },
  { n: "挿入", i: <Svg w={16} h={12}><path d="M6 1h9M6 10.500h9" stroke="currentColor" strokeDasharray="1 1" /><path d="M6 4h9v3.500H6z" stroke="currentColor" /><path d="M0 5.500h4M2.500 3.500l2 2-2 2" stroke="currentColor" /></Svg> },
  { n: "上へ", i: <Svg w={12} h={12}><path d="M6 0l6 6H8.500v5h-5V6H0z" fill="currentColor" /></Svg> },
  { n: "下へ", i: <Svg w={12} h={12}><path d="M6 11l6-6H8.500V0h-5v5H0z" fill="currentColor" /></Svg> },
];

const ActionDialog = () => (
  <Dialog role="dialog" aria-label="高度なアクション">
    <DialogTitle>高度なアクション</DialogTitle>
    <DialogTop>
      <Form>
        <label htmlFor="from">次から作成:</label>
        <MetalSelect $w={150}>
          <select id="from"><option>空欄</option></select>
          <span><Down /></span>
        </MetalSelect>
        <label htmlFor="actname">アクション名:</label>
        <TextBox id="actname" />
      </Form>
      <Existing>
        <Row $gap={5} $mr={5}>
          <MiniButton $round disabled aria-label="再生"><Svg w={8} h={8}><path d="M1 0l7 4-7 4z" fill="currentColor" /></Svg></MiniButton>
          <MiniButton aria-label="新規"><Plus s={12} t={3} /></MiniButton>
          <MiniButton aria-label="読み込み"><Folder /></MiniButton>
          <MiniButton disabled aria-label="書き出し"><Folder out /></MiniButton>
          <MiniButton disabled aria-label="削除"><Trash /></MiniButton>
          <MiniButton disabled aria-label="複製"><Svg w={14} h={12}><path d="M1 1h8v8H1z" stroke="currentColor" /><path d="M5 4h8v7H5z" fill="#eceded" stroke="currentColor" /></Svg></MiniButton>
        </Row>
        <Row $gap={3}>
          <label htmlFor="existing">既存のアクション:</label>
          <MetalSelect $w={200} $fs={11}>
            <select id="existing"><option>アクションを選択してください...</option></select>
            <span><Down /></span>
          </MetalSelect>
        </Row>
      </Existing>
    </DialogTop>
    <Bar>
      <Row $gap={5}>
        <SquareButton aria-label="追加"><Plus /></SquareButton>
        <SquareButton aria-label="削除"><Trash /></SquareButton>
        <SquareButton aria-label="複製"><Svg w={13} h={14}><path d="M4 4H2.500L1 5.500V13h7v-2" stroke="currentColor" strokeWidth="1.200" /><path d="M4 10.500V3l2-2h3l3 3v6.500z" stroke="currentColor" strokeWidth="1.200" /><path d="M7 1h2l3.500 4H7z" fill="currentColor" /></Svg></SquareButton>
      </Row>
      <Spring />
      <Row $gap={6} $mr={169}>
        <SquareButton disabled aria-label="書き出し"><Brief out /></SquareButton>
        <SquareButton aria-label="読み込み"><Brief /></SquareButton>
      </Row>
      <Row $gap={6}>
        <SquareButton disabled aria-label="先頭"><Nav end /></SquareButton>
        <SquareButton disabled aria-label="前へ"><Nav /></SquareButton>
        <SquareButton disabled aria-label="次へ"><Nav flip /></SquareButton>
        <SquareButton disabled aria-label="末尾"><Nav flip end /></SquareButton>
      </Row>
    </Bar>
    <TabRow>
      <ActionTab $on>名称未設定-1</ActionTab>
      <ActionTab>名称未設定-2</ActionTab>
      <ActionTab>名称未設定-3</ActionTab>
      <TabMenu aria-label="タブ一覧"><Down /></TabMenu>
    </TabRow>
    <TabPanel>
      <Conditional><input type="checkbox" />コンディショナルタブ</Conditional>
      <ActionHead>
        アクション
        <Row $gap={13}>
          {headIcons.map((h) => <HeadButton key={h.n} aria-label={h.n} disabled={!h.on}>{h.i}</HeadButton>)}
        </Row>
      </ActionHead>
      <TableWrap>
        <Table>
          <tbody>
            {Array.from({ length: 14 }, (_, r) => <tr key={r}><td /><td /><td /></tr>)}
          </tbody>
        </Table>
        <InnerTrack>
          <button aria-label="上へスクロール"><Svg w={6} h={4}><path d="M0 4h6L3 0z" fill="#8b8d92" /></Svg></button>
          <button aria-label="下へスクロール"><Svg w={6} h={4}><path d="M0 0h6L3 4z" fill="#8b8d92" /></Svg></button>
        </InnerTrack>
      </TableWrap>
    </TabPanel>
    <DialogFoot>
      <FootRow>
        <MetalButton $w={74} disabled>使用状況</MetalButton>
        <MetalButton $w={100}>変数...</MetalButton>
      </FootRow>
      <FootRow>
        <HelpLink href="#help">ヘルプ...</HelpLink>
        <MetalButton $w={154} disabled>共有アクションとして保存...</MetalButton>
        <MetalButton $w={118} disabled>アクションとして保存</MetalButton>
        <MetalButton $w={100}>閉じる</MetalButton>
      </FootRow>
    </DialogFoot>
  </Dialog>
);

export default function App() {
  return (
    <Screen lang="ja">
      <GlobalStyle />
      <MenuBar>
        <Logo>Cp</Logo>
        <Menus>{menus.map((m) => <button key={m} type="button">{m}</button>)}</Menus>
        <VLine $h={20} $m="0 0 0 12px" />
        <QuickTools>
          <Svg w={15} h={14}><path d="M1 1h13v9H1zM4 13h7" stroke="#fff" strokeWidth="1.500" /><path d="M3.500 4h3M8.500 4h3M3.500 7h3M8.500 7h3" stroke="#fff" /></Svg>
          <Svg w={16} h={12}><path d="M0 0h16v12H0z" fill="#fff" /><path d="M0 0l8 7 8-7M0 12l6-6M16 12l-6-6" stroke={dark} /></Svg>
          <Svg w={11} h={12}><path d="M3.500 0h4v6H11l-5.500 6L0 6h3.500z" fill="#fff" /></Svg>
          <Svg w={11} h={12}><path d="M3.500 12h4V6H11L5.500 0 0 6h3.500z" fill="#fff" /></Svg>
          <PageBox aria-label="スライド番号" defaultValue="2" />
          <span>/</span>
          <span>7</span>
          <VLine $h={14} $c="#fff" $m="0 0 0 4px" />
          <SelectWrap $w="116px" $h={20}>
            <select aria-label="ズーム"><option>50</option></select>
            <ThinChevron />
          </SelectWrap>
        </QuickTools>
        <Workspace>
          <VLine $h={20} />
          <span>クラシック</span>
          <Down c="#fff" w={5} />
        </Workspace>
        <WindowButtons>
          <WinBtn $w={27} aria-label="最小化"><Svg w={10} h={4}><path d="M0 0h10v4H0z" fill="#e4e6ea" /></Svg></WinBtn>
          <WinBtn $w={27} aria-label="最大化"><Svg w={10} h={8}><path d="M1.500 1.500h7v5h-7z" stroke="#e4e6ea" strokeWidth="3" /></Svg></WinBtn>
          <WinBtn $w={46} aria-label="閉じる"><Svg w={10} h={9}><path d="M1 0l8 9M9 0L1 9" stroke="#e4e6ea" strokeWidth="2.500" /></Svg></WinBtn>
        </WindowButtons>
      </MenuBar>

      <Frame>
        <ToolBar>
          {toolGroups.map((g, gi) => (
            <React.Fragment key={gi}>
              {gi > 0 && <VLine $h={58} $c="#d3d5dc" $m="0 7px 0 8px" />}
              {g.map((t) => <ToolButton key={t.label} t={t} />)}
            </React.Fragment>
          ))}
          <Spring />
          {rightTools.map((t) => <ToolButton key={t.label} t={t} />)}
        </ToolBar>

        <Body>
          <Column>
            <PanelTitle>フィルムストリップ</PanelTitle>
            <Film>
              <FilmList>
                {slides.map((s, i) => (
                  <FilmItem key={i}>
                    <SlideThumb i={i} />
                    {i < 6 && <FilmNumber>{i + 1}</FilmNumber>}
                  </FilmItem>
                ))}
              </FilmList>
              <FilmTrack />
            </Film>
            <FilmFoot />
          </Column>

          <Column>
            <DocTabs>
              <DocTab type="button">
                名称未設定1.cptx*
                <Svg w={7} h={7}><path d="M0 0l7 7M7 0L0 7" stroke="#44464c" /></Svg>
              </DocTab>
            </DocTabs>
            <StageGrid>
              <Canvas>
                <Slide>
                  <SlideCount>質問 1 / 5</SlideCount>
                  <SlideTitle>ここに質問を入力してください。</SlideTitle>
                  <Answers>
                    <Answer><input type="radio" name="answer" defaultChecked />A) 答えをここに入力してください。</Answer>
                    <Answer><input type="radio" name="answer" />B) 答えをここに入力してください。</Answer>
                  </Answers>
                  <Feedback />
                  <SlideKeys>
                    <SlideKey>&lt;&lt;</SlideKey>
                    <SlideKey>&gt;&gt;</SlideKey>
                  </SlideKeys>
                </Slide>
                <Notice>続行するには、質問に答える必要があります。</Notice>
              </Canvas>
              <VTrack>
                <Svg w={11} h={9}><path d="M1 7l4.500-4.500L10 7" stroke="#505050" strokeWidth="2" /></Svg>
                <Svg w={11} h={9}><path d="M1 2l4.500 4.500L10 2" stroke="#505050" strokeWidth="2" /></Svg>
              </VTrack>
              <HTrack>
                <Svg w={9} h={11}><path d="M7 1L2.500 5.500 7 10" stroke="#505050" strokeWidth="2" /></Svg>
                <Svg w={9} h={11}><path d="M2 1l4.500 4.500L2 10" stroke="#505050" strokeWidth="2" /></Svg>
              </HTrack>
            </StageGrid>
            <Timeline>タイムライン</Timeline>
          </Column>

          <Side>
            <SideTabs>
              <SideTab $on>プロパティ</SideTab>
              <SideTab>タイミング</SideTab>
              <SideTab>クイズ</SideTab>
            </SideTabs>
            <SideTop>
              <Svg w={24} h={21}><path d="M0 0h24v21H0z" fill="#2a7ac0" /><path d="M4.500 4.500h15v12h-15z" fill="#fff" stroke="#124" strokeDasharray="1 1" /></Svg>
              <NameBox aria-label="オブジェクト名" />
              <Spring />
              <Svg w={16} h={12}><path d="M0 4h4L2 6.500zM6 1h10M6 4.500h10M6 8h10M6 11.500h10" fill="#555" stroke="#555" strokeWidth=".9" /></Svg>
            </SideTop>
            <ThemeRow>
              <label htmlFor="theme">テーマ :</label>
              <SelectWrap $w="153px">
                <select id="theme"><option>Blue Veracity</option></select>
                <ThinChevron />
              </SelectWrap>
            </ThemeRow>
            <Centered>
              マスタースライド
              <MasterRow>
                <Master>
                  <ThumbTitle>質問タイトル</ThumbTitle>
                  <ThumbBar>質問</ThumbBar>
                  <ThumbBody>
                    <ThumbLine>○ 答えをここに入力</ThumbLine>
                    <ThumbLine>○ 答えをここに入力</ThumbLine>
                  </ThumbBody>
                  <MasterFoot>続行するには、質問に答える必要があります。</MasterFoot>
                  <MasterKeys>{["<<", ">>", "送信", "消去", "戻る", "次へ"].map((k) => <ThumbKey key={k}>{k}</ThumbKey>)}</MasterKeys>
                </Master>
                <Down c="#2a7ac0" w={11} />
              </MasterRow>
              <MasterName>MCQ、T/F、FIB、シーケンス</MasterName>
              <PlainButton>マスタースライドをリセット</PlainButton>
              <PlainButton>マスタースライドビュー</PlainButton>
            </Centered>
            <SegmentRow>
              <Segments>
                <Segment $on>スタイル</Segment>
                <Segment>アクション</Segment>
                <Segment>オプション</Segment>
              </Segments>
            </SegmentRow>
            <Fields>
              <Check $mb={5}><input type="checkbox" defaultChecked />ジェスチャーナビゲーションを許可</Check>
              <FieldLabel htmlFor="bg">背景</FieldLabel>
              <FieldRow><SelectWrap><select id="bg"><option>マスタースライドの背景</option></select><ThinChevron /></SelectWrap></FieldRow>
              <FieldLabel htmlFor="quality">画質</FieldLabel>
              <FieldRow><SelectWrap><select id="quality"><option>最適</option></select><ThinChevron /></SelectWrap></FieldRow>
              <Check $mt={8}><input type="checkbox" />最上位のマスタースライドオブジェクト</Check>
            </Fields>
          </Side>
        </Body>
      </Frame>

      <StatusBar>
        名称未設定1.cptx*
        <Spring />
        <VLine $h={20} $c="#fff" $m="0 10px 0 0" />
        フィルムストリップビュー
        <VLine $h={20} $c="#fff" $m="0 5px 0 10px" />
        1920 x 1080
      </StatusBar>

      <TaskBar>
        <Start aria-label="スタート"><Svg w={21} h={20}><path d="M0 3l8.500-1.200V9.500H0zM9.500 1.600L21 0v9.500H9.500zM0 10.500h8.500v7.700L0 17zM9.500 10.500H21V20L9.500 18.400z" fill="#111" /></Svg></Start>
        <Search>
          <Svg w={22} h={22}><circle cx="13.500" cy="8" r="6.500" stroke="#222" strokeWidth="1.500" /><path d="M9 12.500L1.500 20" stroke="#222" strokeWidth="1.500" /></Svg>
          <input placeholder="ここに入力して検索" aria-label="検索" />
          <SearchArt>
            <Svg w={38} h={32}><path d="M13 6V2h12v4" stroke="#3a3a3a" strokeWidth="3" /><rect x="0" y="5" width="38" height="26" rx="2" fill="#a85c08" /><path d="M0 7q0-2 2-2h34q2 0 2 2v12H0z" fill="#dd8a12" /><rect x="16" y="16" width="6" height="7" fill="#fbd42c" /></Svg>
          </SearchArt>
        </Search>
        {taskIcons.map((t) => (
          <TaskButton key={t.n} aria-label={t.n} $line={t.line} $on={t.on}><span>{t.i}</span></TaskButton>
        ))}
        <Tray>
          <Svg w={16} h={9}><path d="M1 8l7-7 7 7" stroke="#111" strokeWidth="1.500" /></Svg>
          <Svg w={20} h={20}><rect x="3" y="5" width="9" height="10" rx="2" stroke="#111" strokeWidth="1.500" /><path d="M12 9l4-2v6l-4-2M3 2q4.500-2 9 0M3 18q4.500 2 9 0" stroke="#111" strokeWidth="1.300" /></Svg>
          <Svg w={20} h={16}><path d="M7 3.500h12v10H4.500V9" stroke="#111" strokeWidth="1.200" /><path d="M6.500 5.500h11v6.500h-11z" fill="#111" /><path d="M1 3h5v3.500H1zM2 0v3M5 0v3M3.500 6v7" stroke="#111" strokeWidth="1.300" /></Svg>
          <Svg w={21} h={17}><path d="M6 1h14v10H5V6M12 11v4M8 16h9M1 1h4v4H1z" stroke="#111" strokeWidth="1.300" /></Svg>
          <Svg w={20} h={14}><path d="M1 5h3l4-4v12L4 9H1zM12 4l6 6M18 4l-6 6" stroke="#111" strokeWidth="1.300" /></Svg>
          <InputMode>A</InputMode>
          <Clock>18:03<br />2023/06/13</Clock>
          <Svg w={21} h={20}><path d="M0 0h21v15h-7l-3.500 4.500L7 15H0z" fill="#111" /><path d="M4 4.500h13M4 7.500h13M4 10.500h8" stroke="#fff" strokeWidth="1.300" /></Svg>
        </Tray>
      </TaskBar>

      <ActionDialog />
    </Screen>
  );
}
